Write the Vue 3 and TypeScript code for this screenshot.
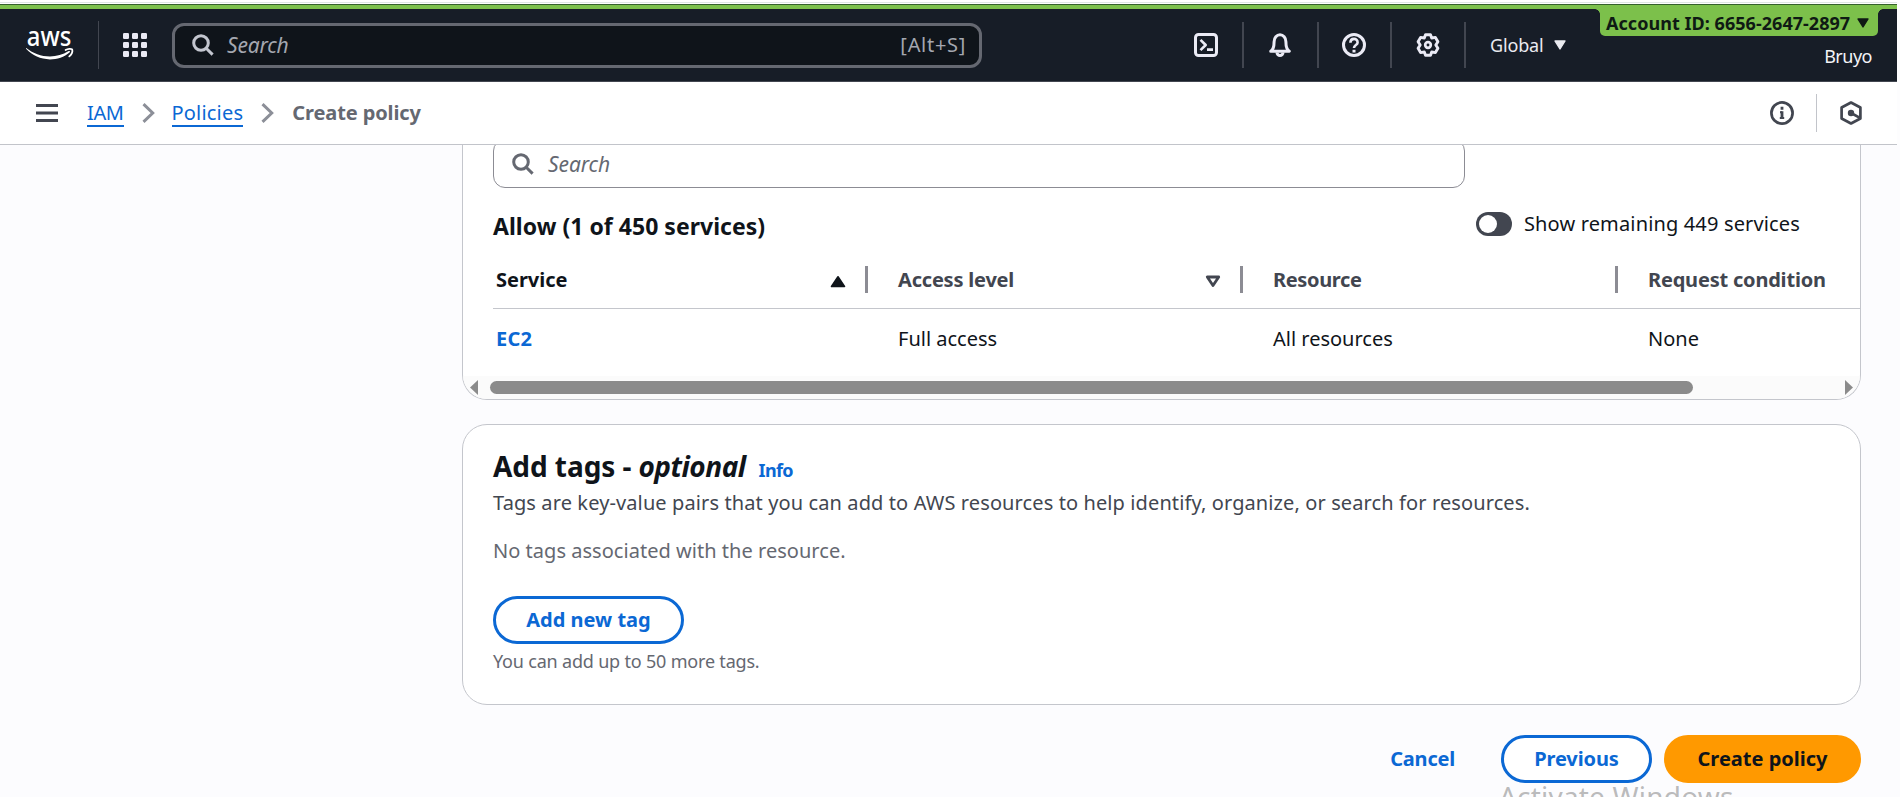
<script setup lang="ts">
import { ref } from 'vue'

interface Column {
  key: string
  label: string
  value: string
  sort?: 'asc' | 'none'
}

const columns: Column[] = [
  { key: 'service', label: 'Service', value: 'EC2', sort: 'asc' },
  { key: 'access', label: 'Access level', value: 'Full access', sort: 'none' },
  { key: 'resource', label: 'Resource', value: 'All resources' },
  { key: 'condition', label: 'Request condition', value: 'None' },
]

const showRemaining = ref(false)
</script>

<template>
  <div class="page">
    <div class="frame">
      <div class="strip"></div>
      <header class="nav">
        <svg class="logo" width="50" height="60" viewBox="0 -12 50 60">
          <text x="0.800" y="18.800" textLength="44.500" lengthAdjust="spacingAndGlyphs">aws</text>
          <path d="M.6 23.2C7 28.3 15 31.4 24 31.4c6.600 0 13-1.900 18.200-5.100 1.400-.8 2.600 0 1.300 1.200C38.500 32 31 34.400 24 34.400 14.500 34.400 6.300 30.500.3 24.100c-.6-.6-.3-1.300.3-.9z" fill="#fff" transform="translate(0 -2)" />
          <path d="M39.600 23c2.200-1.400 5.500-1.500 6.600-.6.500 1.700-.6 4.900-2.900 7" fill="none" stroke="#fff" stroke-width="1.800" stroke-linecap="round" />
        </svg>
        <span class="nav-line first"></span>
        <svg class="apps" width="24" height="24" viewBox="0 0 24 24" fill="#ebebf5">
          <template v-for="r in 3" :key="r">
            <rect v-for="c in 3" :key="c" :x="(c - 1) * 9" :y="(r - 1) * 9" width="6" height="6" rx="1.200" />
          </template>
        </svg>
        <div class="nav-search">
          <svg width="22" height="22" viewBox="0 0 22 22" fill="none" stroke="#c3c6cf" stroke-width="3"><circle cx="9" cy="9" r="7.300" /><path d="M14.200 14.200l6.400 6.400" /></svg>
          <span class="nav-ph">Search</span>
          <span class="shortcut">[Alt+S]</span>
        </div>
        <div class="nav-tools">
          <svg width="24" height="24" viewBox="0 0 24 24" class="ic"><rect x="1.500" y="1.500" width="21" height="21" rx="3" /><path d="M6.500 6.800l5.200 5.200-5.200 5.200M13 16.600h6" stroke-width="2.600" /></svg>
          <span class="nav-line"></span>
          <svg width="24" height="24" viewBox="0 0 24 24" class="ic"><path d="M2.700 18.200c2.500-1.500 3.400-4.500 3.400-9.500a5.900 6.900 0 0 1 11.800 0c0 5 .9 8 3.400 9.500z" /><path d="M9 19.500a3 2.900 0 0 0 6 0" /></svg>
          <span class="nav-line mid"></span>
          <svg width="24" height="24" viewBox="0 0 24 24" class="ic"><circle cx="12" cy="12" r="10.500" /><path d="M8.400 9.700c0-5 7.200-5 7.200-.3 0 2.800-3.600 2.600-3.600 5.700" stroke-width="2.600" /><path d="M12 16.800v2.700" /></svg>
          <span class="nav-line"></span>
          <svg width="24" height="24" viewBox="0 0 24 24" class="ic"><path d="M9.500 1.700h5l1.200 3.300 3.700-.6 2.500 4.300L19.800 12l2.100 3.300-2.500 4.300-3.700-.6-1.200 3.300h-5L8.300 19l-3.700.6-2.500-4.300L4.200 12 2.100 8.700l2.500-4.300 3.700.6z" stroke-width="2.900" /><circle cx="12" cy="12" r="2.800" stroke-width="2.700" /></svg>
          <span class="nav-line"></span>
          <div class="region">
            <span>Global</span>
            <svg width="12" height="10" viewBox="0 0 12 10"><path d="M1 1h10L6 9z" fill="#ebebf0" stroke="#ebebf0" stroke-width="1.400" stroke-linejoin="round" /></svg>
          </div>
        </div>
        <div class="account">
          <div class="badge">
            <span>Account ID: 6656-2647-2897</span>
            <svg width="12" height="10" viewBox="0 0 12 10"><path d="M1 1h10L6 9z" fill="#0f1a14" stroke="#0f1a14" stroke-width="1.400" stroke-linejoin="round" /></svg>
          </div>
          <div class="user">Bruyo</div>
        </div>
      </header>

      <div class="crumbs">
        <svg class="burger" width="22" height="18" viewBox="0 0 22 18" stroke="#424650" stroke-width="3"><path d="M0 1.500h22M0 9h22M0 16.500h22" /></svg>
        <a class="link iam">IAM</a>
        <svg class="chev" width="13" height="20" viewBox="0 0 13 20"><path d="M1.500 1.200L10.700 10l-9.200 8.800" /></svg>
        <a class="link">Policies</a>
        <svg class="chev" width="13" height="20" viewBox="0 0 13 20"><path d="M1.500 1.200L10.700 10l-9.200 8.800" /></svg>
        <span class="current">Create policy</span>
        <div class="crumb-tools">
          <svg width="24" height="24" viewBox="0 0 24 24" fill="none" stroke="#424650" stroke-width="2.700"><circle cx="12" cy="12" r="10.600" /><path d="M12 5.800v3M12 10.200V18" stroke-width="2.800" /><path d="M10 11.200h2M9.800 17h4.400" stroke-width="2" /></svg>
          <span class="crumb-line"></span>
          <svg width="24" height="24" viewBox="0 0 24 24" fill="none" stroke="#424650" stroke-width="2.700" stroke-linejoin="round"><path d="M12 1.500l9.400 5v11l-9.400 5-9.400-5v-11z" /><circle cx="12" cy="12" r="3.200" fill="#424650" stroke="none" /><path d="M12 12l8.500 4.600" /></svg>
        </div>
      </div>
    </div>

    <main>
      <section class="panel perms">
        <div class="filter">
          <svg width="22" height="22" viewBox="0 0 22 22" fill="none" stroke="#656871" stroke-width="3"><circle cx="9" cy="9" r="7.300" /><path d="M14.200 14.200l6.400 6.400" /></svg>
          <span>Search</span>
        </div>
        <div class="allow">
          <h3>Allow (1 of 450 services)</h3>
          <label class="toggle" @click="showRemaining = !showRemaining">
            <span class="track" :class="{ on: showRemaining }"><span class="knob"></span></span>
            <span>Show remaining 449 services</span>
          </label>
        </div>
        <div class="row head">
          <div v-for="c in columns" :key="c.key" class="cell" :class="c.key">
            <span class="label">{{ c.label }}</span>
            <svg v-if="c.sort === 'asc'" class="sort" width="16" height="13" viewBox="0 0 16 13"><path d="M1.500 11.500h13L8 1.800z" fill="#0f141a" stroke="#0f141a" stroke-width="1.600" stroke-linejoin="round" /></svg>
            <svg v-else-if="c.sort" class="sort" width="16" height="13" viewBox="0 0 16 13"><path d="M2.300 2h11.400L8 10.600z" fill="none" stroke="#424650" stroke-width="2.800" stroke-linejoin="round" /></svg>
            <span v-if="c.key !== 'condition'" class="divider"></span>
          </div>
        </div>
        <div class="row body">
          <div v-for="c in columns" :key="c.key" class="cell" :class="c.key">{{ c.value }}</div>
        </div>
        <div class="scroll">
          <svg width="8" height="15" viewBox="0 0 8 15"><path d="M8 0v15L0 7.500z" fill="#8b8b8b" /></svg>
          <div class="thumb"></div>
          <svg class="right" width="8" height="15" viewBox="0 0 8 15"><path d="M0 0v15l8-7.500z" fill="#8b8b8b" /></svg>
        </div>
      </section>

      <section class="panel tags">
        <h2><span>Add tags -</span><i>optional</i><a>Info</a></h2>
        <p class="desc">Tags are key-value pairs that you can add to AWS resources to help identify, organize, or search for resources.</p>
        <p class="none">No tags associated with the resource.</p>
        <button class="btn add">Add new tag</button>
        <p class="hint">You can add up to 50 more tags.</p>
      </section>

      <div class="actions">
        <button class="cancel">Cancel</button>
        <button class="btn prev">Previous</button>
        <button class="btn create">Create policy</button>
      </div>
    </main>
    <div class="watermark">Activate Windows</div>
  </div>
</template>

<style>
body {
  margin: 0;
  overflow: hidden;
}
</style>

<style scoped>
.page {
  position: relative;
  width: 1900px;
  height: 797px;
  overflow: hidden;
  background: #fcfcfe;
  font: 20px/26px "Noto Sans", "Open Sans", sans-serif;
  color: #0f141a;
}
h2, h3, p { margin: 0; }
svg { display: block; flex: none; }
.frame {
  border-right: 3px solid #fdfdfe;
  background: #fff;
}
.strip {
  height: 9px;
  background: linear-gradient(#fff 2px, #dfe6e4 2px 3px, #fff 3px 4px, #35602c 4px 5px, #7cc04b 5px);
}
.nav {
  display: flex;
  align-items: center;
  height: 73px;
  box-sizing: border-box;
  background: #171d27;
  border-bottom: 1px solid #424650;
}
.logo { margin-left: 26px; }
.logo text {
  font: 500 26.500px "Noto Sans", sans-serif;
  fill: #fff;
}
.nav-line {
  width: 2px;
  height: 46px;
  background: #424650;
}
.nav-line.first {
  width: 1px;
  height: 48px;
  margin-left: 22px;
}
.nav-line.mid { margin: 0 -1px 0 1px; }
.apps { margin-left: 24px; }
.nav-search {
  display: flex;
  align-items: center;
  box-sizing: border-box;
  width: 810px;
  height: 45px;
  margin-left: 25px;
  padding: 0 13px 0 17px;
  border: 3px solid #656871;
  border-radius: 12px;
  background: #0f141a;
  color: #a4a7b0;
}
.nav-ph {
  margin-left: 13px;
  font-size: 21px;
  font-style: italic;
  letter-spacing: -0.200px;
}
.shortcut {
  margin-left: auto;
  letter-spacing: 0.700px;
}
.nav-tools {
  display: flex;
  align-items: center;
  gap: 24px;
  margin-left: 212px;
}
.ic {
  fill: none;
  stroke: #ebebf5;
  stroke-width: 3;
  stroke-linejoin: round;
}
.region {
  display: flex;
  align-items: center;
  gap: 10px;
  font-size: 18px;
  letter-spacing: -0.150px;
  color: #ebebf0;
}
.account {
  align-self: stretch;
  width: 278px;
  margin-left: auto;
  margin-right: 19px;
}
.badge {
  position: relative;
  display: flex;
  align-items: center;
  height: 27px;
  padding-left: 6px;
  gap: 7px;
  border-radius: 0 0 5px 5px;
  background: #7cc04b;
  color: #0f1a14;
  font-size: 18px;
  font-weight: 700;
  letter-spacing: 0.040px;
}
.badge::before, .badge::after {
  content: "";
  position: absolute;
  top: 0;
  width: 5px;
  height: 5px;
}
.badge::before {
  left: -5px;
  background: radial-gradient(circle at 0 100%, transparent 4.500px, #7cc04b 5px);
}
.badge::after {
  right: -5px;
  background: radial-gradient(circle at 100% 100%, transparent 4.500px, #7cc04b 5px);
}
.user {
  padding: 8px 6px 0 0;
  font-size: 18px;
  line-height: 24px;
  text-align: right;
  letter-spacing: -0.500px;
  color: #f3f3f7;
}
.crumbs {
  display: flex;
  align-items: center;
  height: 62px;
  padding: 0 34px 0 36px;
  border-bottom: 1px solid #c2c4ca;
}
.link {
  margin-left: 7px;
  color: #0b68d4;
  letter-spacing: 0.200px;
  line-height: 25px;
  border-bottom: 2px solid #0b68d4;
}
.link.iam { margin-left: 29px; letter-spacing: -0.400px; }
.chev {
  margin: 0 10px 0 18px;
  fill: none;
  stroke: #8c8f98;
  stroke-width: 3;
}
.current {
  margin-left: 8px;
  font-weight: 700;
  letter-spacing: -0.100px;
  color: #656871;
}
.crumb-tools {
  display: flex;
  align-items: center;
  margin-left: auto;
  gap: 22px;
}
.crumb-line {
  width: 1px;
  height: 38px;
  background: #c2c4ca;
}
main {
  width: 1399px;
  height: 652px;
  margin-left: 462px;
  overflow: hidden;
}
.panel {
  box-sizing: border-box;
  border: 1px solid #c4c6cc;
  border-radius: 25px;
  background: #fff;
  overflow: hidden;
}
.perms {
  height: 261px;
  margin-top: -6px;
  border-top: 0;
  border-radius: 0 0 25px 25px;
}
.filter {
  display: flex;
  align-items: center;
  box-sizing: border-box;
  width: 972px;
  height: 49px;
  margin-left: 30px;
  padding: 0 18px;
  border: 1px solid #8c8c94;
  border-radius: 12px;
  font-size: 21px;
  font-style: italic;
  letter-spacing: -0.100px;
  color: #656871;
}
.filter span { margin-left: 14px; }
.allow {
  display: flex;
  align-items: center;
  justify-content: space-between;
  height: 76px;
  margin: 0 60px 0 30px;
}
h3 {
  font-size: 23px;
  font-weight: 700;
  letter-spacing: 0.030px;
}
.toggle {
  display: flex;
  align-items: center;
  gap: 12px;
  margin-bottom: 4px;
  letter-spacing: 0.150px;
}
.track {
  display: flex;
  width: 36px;
  height: 24px;
  box-sizing: border-box;
  padding: 3px;
  border-radius: 12px;
  background: #424650;
}
.track.on { justify-content: flex-end; }
.knob {
  width: 18px;
  height: 18px;
  border-radius: 50%;
  background: #fff;
}
.row {
  display: grid;
  grid-template-columns: 375px 375px 375px 1fr;
  margin-left: 30px;
}
.cell {
  display: flex;
  align-items: center;
  padding-left: 30px;
  white-space: nowrap;
}
.cell.service { padding-left: 3px; }
.head {
  height: 31px;
  padding-bottom: 13px;
  border-bottom: 1px solid #c4c6cc;
  font-weight: 700;
  letter-spacing: -0.200px;
  color: #424650;
}
.head .service { color: #0f141a; letter-spacing: -0.030px; }
.head .resource { letter-spacing: -0.350px; }
.sort { margin: 3px 19px 0 auto; }
.divider {
  width: 3px;
  height: 27px;
  margin-left: auto;
  background: #8c8c94;
}
.sort + .divider { margin-left: 0; }
.body {
  height: 58px;
  padding: 1px 0 8px;
}
.body .service {
  font-weight: 700;
  color: #0b68d4;
  letter-spacing: 0.200px;
}
.scroll {
  display: flex;
  align-items: center;
  height: 23px;
  padding: 0 7px;
  background: #fbfbfb;
}
.thumb {
  width: 1203px;
  height: 13px;
  margin-left: 12px;
  border-radius: 7px;
  background: #8b8b8b;
}
.scroll .right { margin-left: auto; }
.tags {
  height: 281px;
  margin-top: 24px;
  padding: 22px 30px 0;
}
h2 {
  display: flex;
  align-items: baseline;
  height: 38px;
  font-size: 28px;
  line-height: 38px;
  font-weight: 700;
  letter-spacing: -0.050px;
}
h2 i { margin-left: 7px; letter-spacing: -0.500px; }
h2 a {
  margin-left: 13px;
  font-size: 18px;
  letter-spacing: -0.650px;
  color: #0b68d4;
}
.desc {
  margin-top: 5px;
  letter-spacing: 0.110px;
  color: #424650;
}
.none {
  margin-top: 22px;
  letter-spacing: 0.030px;
  color: #656871;
}
.btn {
  display: block;
  box-sizing: border-box;
  height: 48px;
  padding: 0;
  border: 3px solid #0b68d4;
  border-radius: 24px;
  background: #fff;
  color: #0b68d4;
  font: 700 20px/26px "Noto Sans", "Open Sans", sans-serif;
}
.add {
  width: 191px;
  margin-top: 32px;
}
.hint {
  margin-top: 5px;
  font-size: 18px;
  line-height: 24px;
  letter-spacing: -0.190px;
  color: #656871;
}
.actions {
  display: flex;
  align-items: center;
  justify-content: flex-end;
  padding-top: 30px;
}
.cancel {
  padding: 0;
  margin-right: 46px;
  border: 0;
  background: none;
  color: #0b68d4;
  font: 700 20px/26px "Noto Sans", "Open Sans", sans-serif;
  letter-spacing: -0.200px;
}
.prev {
  width: 151px;
  margin-right: 12px;
  letter-spacing: -0.100px;
}
.create {
  width: 197px;
  border-color: #ff9900;
  background: #ff9900;
  color: #0f141a;
}
.watermark {
  position: absolute;
  left: 1499px;
  top: 777px;
  font-size: 28px;
  line-height: 38px;
  letter-spacing: 0.200px;
  color: rgba(130, 130, 130, 0.550);
}
</style>
